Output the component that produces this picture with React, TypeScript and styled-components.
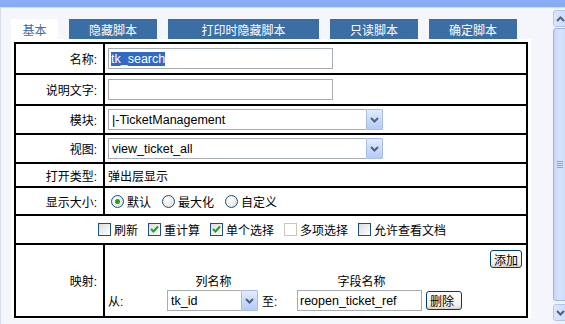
import React from "react";
import styled, { createGlobalStyle } from "styled-components";

const GlobalStyle = createGlobalStyle`
  html, body {
    margin: 0;
    padding: 0;
    background: #f4f6fc;
  }
  body {
    font-family: "Liberation Sans", "Noto Sans CJK SC", sans-serif;
    font-size: 12px;
    color: #000;
  }
`;

const CJK = `"Liberation Sans", "Noto Sans CJK SC", sans-serif`;

const Frame = styled.div`
  width: 565px;
  height: 324px;
  display: flex;
  flex-direction: column;
  overflow: hidden;
`;

const TitleBar = styled.div`
  height: 7px;
  background: #8aabf5;
  border-bottom: 1px solid #e6e2b8;
`;

const Body = styled.div`
  flex: 1;
  display: flex;
  min-height: 0;
`;

const Main = styled.div`
  flex: 1;
  border-left: 1px solid #d5dcec;
  padding: 11px 0 0 10px;
`;

const TabBar = styled.div`
  display: flex;
  gap: 11px;
`;

const Tab = styled.div<{ $active?: boolean; $w: number }>`
  width: ${(p) => p.$w}px;
  height: 20px;
  display: flex;
  align-items: center;
  justify-content: center;
  font-family: ${CJK};
  font-size: 12px;
  background: ${(p) => (p.$active ? "#ffffff" : "#3b6ea5")};
  color: ${(p) => (p.$active ? "#3b6ea5" : "#ffffff")};
`;

const Panel = styled.div`
  width: 514px;
  background: #fff;
  padding: 3px 3px 1px 3px;
`;

const FormGrid = styled.div`
  display: grid;
  grid-template-columns: 89px 423px;
  border-top: 2px solid #000;
  border-left: 2px solid #000;
`;

const Cell = styled.div<{ $h: number }>`
  box-sizing: border-box;
  height: ${(p) => p.$h}px;
  border-right: 2px solid #000;
  border-bottom: 2px solid #000;
  display: flex;
  align-items: center;
`;

const LabelCell = styled(Cell)`
  justify-content: flex-end;
  padding-right: 6px;
  font-family: ${CJK};
`;

const ValueCell = styled(Cell)`
  padding-left: 3px;
  font-family: ${CJK};
`;

const WideCell = styled(Cell)`
  grid-column: 1 / -1;
  justify-content: center;
  padding-left: 2px;
  font-family: ${CJK};
`;

const TextBox = styled.div<{ $w: number }>`
  box-sizing: border-box;
  width: ${(p) => p.$w}px;
  height: 21px;
  border: 1px solid #a5acb2;
  background: #fff;
  padding-left: 2px;
  display: flex;
  align-items: center;
  font-size: 12.5px;
  white-space: nowrap;
`;

const Selected = styled.span`
  background: #316ac5;
  color: #fff;
  line-height: 14px;
`;

const SelectBox = styled.div<{ $w: number }>`
  box-sizing: border-box;
  width: ${(p) => p.$w}px;
  height: 21px;
  display: flex;
  background: #fff;
`;

const SelectText = styled.div`
  flex: 1;
  border: 1px solid #a5acb2;
  border-right: none;
  padding-left: 3px;
  display: flex;
  align-items: center;
  font-size: 12.5px;
  white-space: nowrap;
  overflow: hidden;
`;

const DropButton = styled.div`
  box-sizing: border-box;
  width: 17px;
  height: 21px;
  border: 1px solid #a9bce6;
  border-radius: 1px;
  background: linear-gradient(#e3ebfd, #c6d7f9 60%, #b6cbf6);
  display: flex;
  align-items: center;
  justify-content: center;
`;

const Chevron = ({ up }: { up?: boolean }) => (
  <svg width="9" height="6" viewBox="0 0 9 6">
    <path
      d={up ? "M1 5 L4.5 1.5 L8 5" : "M1 1 L4.5 4.5 L8 1"}
      stroke="#4d6185"
      strokeWidth="2"
      fill="none"
    />
  </svg>
);

const Select = ({ w, value }: { w: number; value: string }) => (
  <SelectBox $w={w}>
    <SelectText>{value}</SelectText>
    <DropButton>
      <Chevron />
    </DropButton>
  </SelectBox>
);

const OptionGroup = styled.div<{ $gap: number }>`
  display: flex;
  align-items: center;
  gap: ${(p) => p.$gap}px;
`;

const Option = styled.label`
  display: flex;
  align-items: center;
  gap: 3px;
  font-family: ${CJK};
  font-size: 12px;
  white-space: nowrap;
`;

const RadioDot = styled.span<{ $on?: boolean }>`
  box-sizing: border-box;
  width: 13px;
  height: 13px;
  border-radius: 50%;
  border: 1px solid #1c5180;
  background: radial-gradient(circle at 35% 35%, #ffffff, #dcdcd6);
  display: flex;
  align-items: center;
  justify-content: center;
  &::after {
    content: "";
    width: 5px;
    height: 5px;
    border-radius: 50%;
    background: ${(p) => (p.$on ? "#21a121" : "transparent")};
  }
`;

const CheckBox = styled.span<{ $disabled?: boolean }>`
  box-sizing: border-box;
  width: 13px;
  height: 13px;
  border: 1px solid ${(p) => (p.$disabled ? "#cac8bb" : "#1c5180")};
  background: ${(p) =>
    p.$disabled ? "#fff" : "linear-gradient(135deg, #dcdcd7, #ffffff)"};
  display: flex;
  align-items: center;
  justify-content: center;
`;

const Check = ({ on, disabled }: { on?: boolean; disabled?: boolean }) => (
  <CheckBox $disabled={disabled}>
    {on && (
      <svg width="11" height="11" viewBox="0 0 11 11">
        <polyline
          points="2,5 4.5,7.5 9,2.5"
          stroke="#21a121"
          strokeWidth="2"
          fill="none"
        />
      </svg>
    )}
  </CheckBox>
);

const MapCell = styled(Cell)`
  flex-direction: column;
  align-items: stretch;
  padding: 5px 4px 0 3px;
  font-family: ${CJK};
`;

const AddRow = styled.div`
  display: flex;
  justify-content: flex-end;
`;

const XPButton = styled.button<{ $h: number }>`
  box-sizing: border-box;
  height: ${(p) => p.$h}px;
  padding: 0 3px;
  border: 1px solid #003c74;
  border-radius: 3px;
  background: linear-gradient(#ffffff, #f0efea 80%, #d8d2c6);
  font-family: ${CJK};
  font-size: 12px;
  color: #000;
  display: flex;
  align-items: center;
`;

const MapTable = styled.div`
  display: grid;
  grid-template-columns: 59px 93px 37px 129px 36px;
  grid-template-rows: 22px 21px;
  align-items: center;
`;

const MapHead = styled.div`
  text-align: center;
  font-size: 12px;
  padding-top: 3px;
`;

const ScrollBar = styled.div`
  width: 12px;
  overflow: hidden;
  display: flex;
  flex-direction: column;
  padding: 2px 0 3px;
  background: #f0f3fc;
`;

const ScrollButton = styled.div`
  box-sizing: border-box;
  width: 17px;
  height: 17px;
  border: 1px solid #b2c5ea;
  border-radius: 3px;
  background: linear-gradient(to right, #dce6fc, #c9d8f8);
  display: flex;
  align-items: center;
  padding-left: 2px;
`;

const Thumb = styled.div`
  box-sizing: border-box;
  width: 17px;
  flex: 1;
  margin: 1px 0 3px;
  border: 1px solid #9fb6e6;
  border-radius: 3px;
  background: linear-gradient(to right, #c6d6f9, #d9e4fc 40%, #c3d4f8);
  display: flex;
  align-items: center;
  padding-left: 3px;
`;

const Grip = styled.div`
  width: 6px;
  height: 7px;
  background: repeating-linear-gradient(#8aa4d8 0 1px, transparent 1px 2px);
`;

export default function App() {
  return (
    <>
      <GlobalStyle />
      <Frame>
        <TitleBar />
        <Body>
          <Main>
            <TabBar>
              <Tab $active $w={47}>基本</Tab>
              <Tab $w={88}>隐藏脚本</Tab>
              <Tab $w={151}>打印时隐藏脚本</Tab>
              <Tab $w={88}>只读脚本</Tab>
              <Tab $w={88}>确定脚本</Tab>
            </TabBar>
            <Panel>
              <FormGrid>
                <LabelCell $h={31}>名称:</LabelCell>
                <ValueCell $h={31}>
                  <TextBox $w={225}>
                    <Selected>tk_search</Selected>
                  </TextBox>
                </ValueCell>

                <LabelCell $h={31}>说明文字:</LabelCell>
                <ValueCell $h={31}>
                  <TextBox $w={225} />
                </ValueCell>

                <LabelCell $h={29}>模块:</LabelCell>
                <ValueCell $h={29}>
                  <Select w={275} value="|-TicketManagement" />
                </ValueCell>

                <LabelCell $h={29}>视图:</LabelCell>
                <ValueCell $h={29}>
                  <Select w={275} value="view_ticket_all" />
                </ValueCell>

                <LabelCell $h={24}>打开类型:</LabelCell>
                <ValueCell $h={24}>弹出层显示</ValueCell>

                <LabelCell $h={28}>显示大小:</LabelCell>
                <ValueCell $h={28}>
                  <OptionGroup $gap={11} style={{ paddingLeft: 3 }}>
                    <Option>
                      <RadioDot $on />
                      默认
                    </Option>
                    <Option>
                      <RadioDot />
                      最大化
                    </Option>
                    <Option>
                      <RadioDot />
                      自定义
                    </Option>
                  </OptionGroup>
                </ValueCell>

                <WideCell $h={29}>
                  <OptionGroup $gap={10}>
                    <Option>
                      <Check />
                      刷新
                    </Option>
                    <Option>
                      <Check on />
                      重计算
                    </Option>
                    <Option>
                      <Check on />
                      单个选择
                    </Option>
                    <Option>
                      <Check disabled />
                      多项选择
                    </Option>
                    <Option>
                      <Check />
                      允许查看文档
                    </Option>
                  </OptionGroup>
                </WideCell>

                <LabelCell $h={73}>映射:</LabelCell>
                <MapCell $h={73}>
                  <AddRow>
                    <XPButton $h={18}>添加</XPButton>
                  </AddRow>
                  <MapTable>
                    <span />
                    <MapHead>列名称</MapHead>
                    <span />
                    <MapHead>字段名称</MapHead>
                    <span />
                    <span>从:</span>
                    <Select w={91} value="tk_id" />
                    <span style={{ paddingLeft: 2 }}>至:</span>
                    <TextBox $w={125}>reopen_ticket_ref</TextBox>
                    <XPButton $h={19}>删除</XPButton>
                  </MapTable>
                </MapCell>
              </FormGrid>
            </Panel>
          </Main>
          <ScrollBar>
            <ScrollButton>
              <Chevron up />
            </ScrollButton>
            <Thumb>
              <Grip />
            </Thumb>
            <ScrollButton>
              <Chevron />
            </ScrollButton>
          </ScrollBar>
        </Body>
      </Frame>
    </>
  );
}
